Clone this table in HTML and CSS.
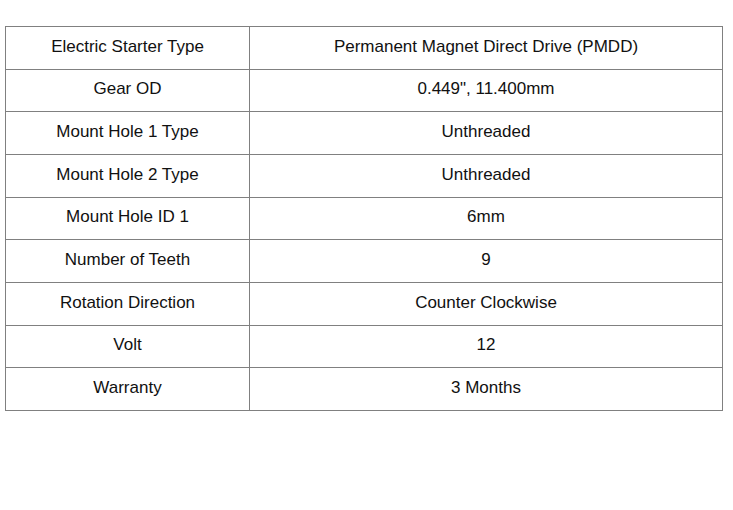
FILE: index.html
```html
<!DOCTYPE html>
<html>
<head>
<meta charset="utf-8">
<link rel="stylesheet" href="styles.css">
</head>
<body>
<div class="wrap">
<table class="specs">
<tbody>
<tr><td class="k">Electric Starter Type</td><td class="v">Permanent Magnet Direct Drive (PMDD)</td></tr>
<tr><td class="k">Gear OD</td><td class="v">0.449", 11.400mm</td></tr>
<tr><td class="k">Mount Hole 1 Type</td><td class="v">Unthreaded</td></tr>
<tr><td class="k">Mount Hole 2 Type</td><td class="v">Unthreaded</td></tr>
<tr><td class="k">Mount Hole ID 1</td><td class="v">6mm</td></tr>
<tr><td class="k">Number of Teeth</td><td class="v">9</td></tr>
<tr><td class="k">Rotation Direction</td><td class="v">Counter Clockwise</td></tr>
<tr><td class="k">Volt</td><td class="v">12</td></tr>
<tr><td class="k">Warranty</td><td class="v">3 Months</td></tr>
</tbody>
</table>
</div>
</body>
</html>
```
FILE: styles.css
```css
html, body {
  margin: 0;
  padding: 0;
  background: #fff;
}
.wrap {
  padding: 26px 0 0 5px;
}
.specs {
  width: 718px;
  border-collapse: collapse;
  font-family: "Liberation Sans", Arial, sans-serif;
  font-size: 17px;
  color: #111;
}
.specs td {
  border: 1px solid #808080;
  text-align: center;
  vertical-align: middle;
  padding: 0 8px 2px;
  height: 42.67px;
  box-sizing: border-box;
}
.specs .k {
  width: 244px;
}
```
